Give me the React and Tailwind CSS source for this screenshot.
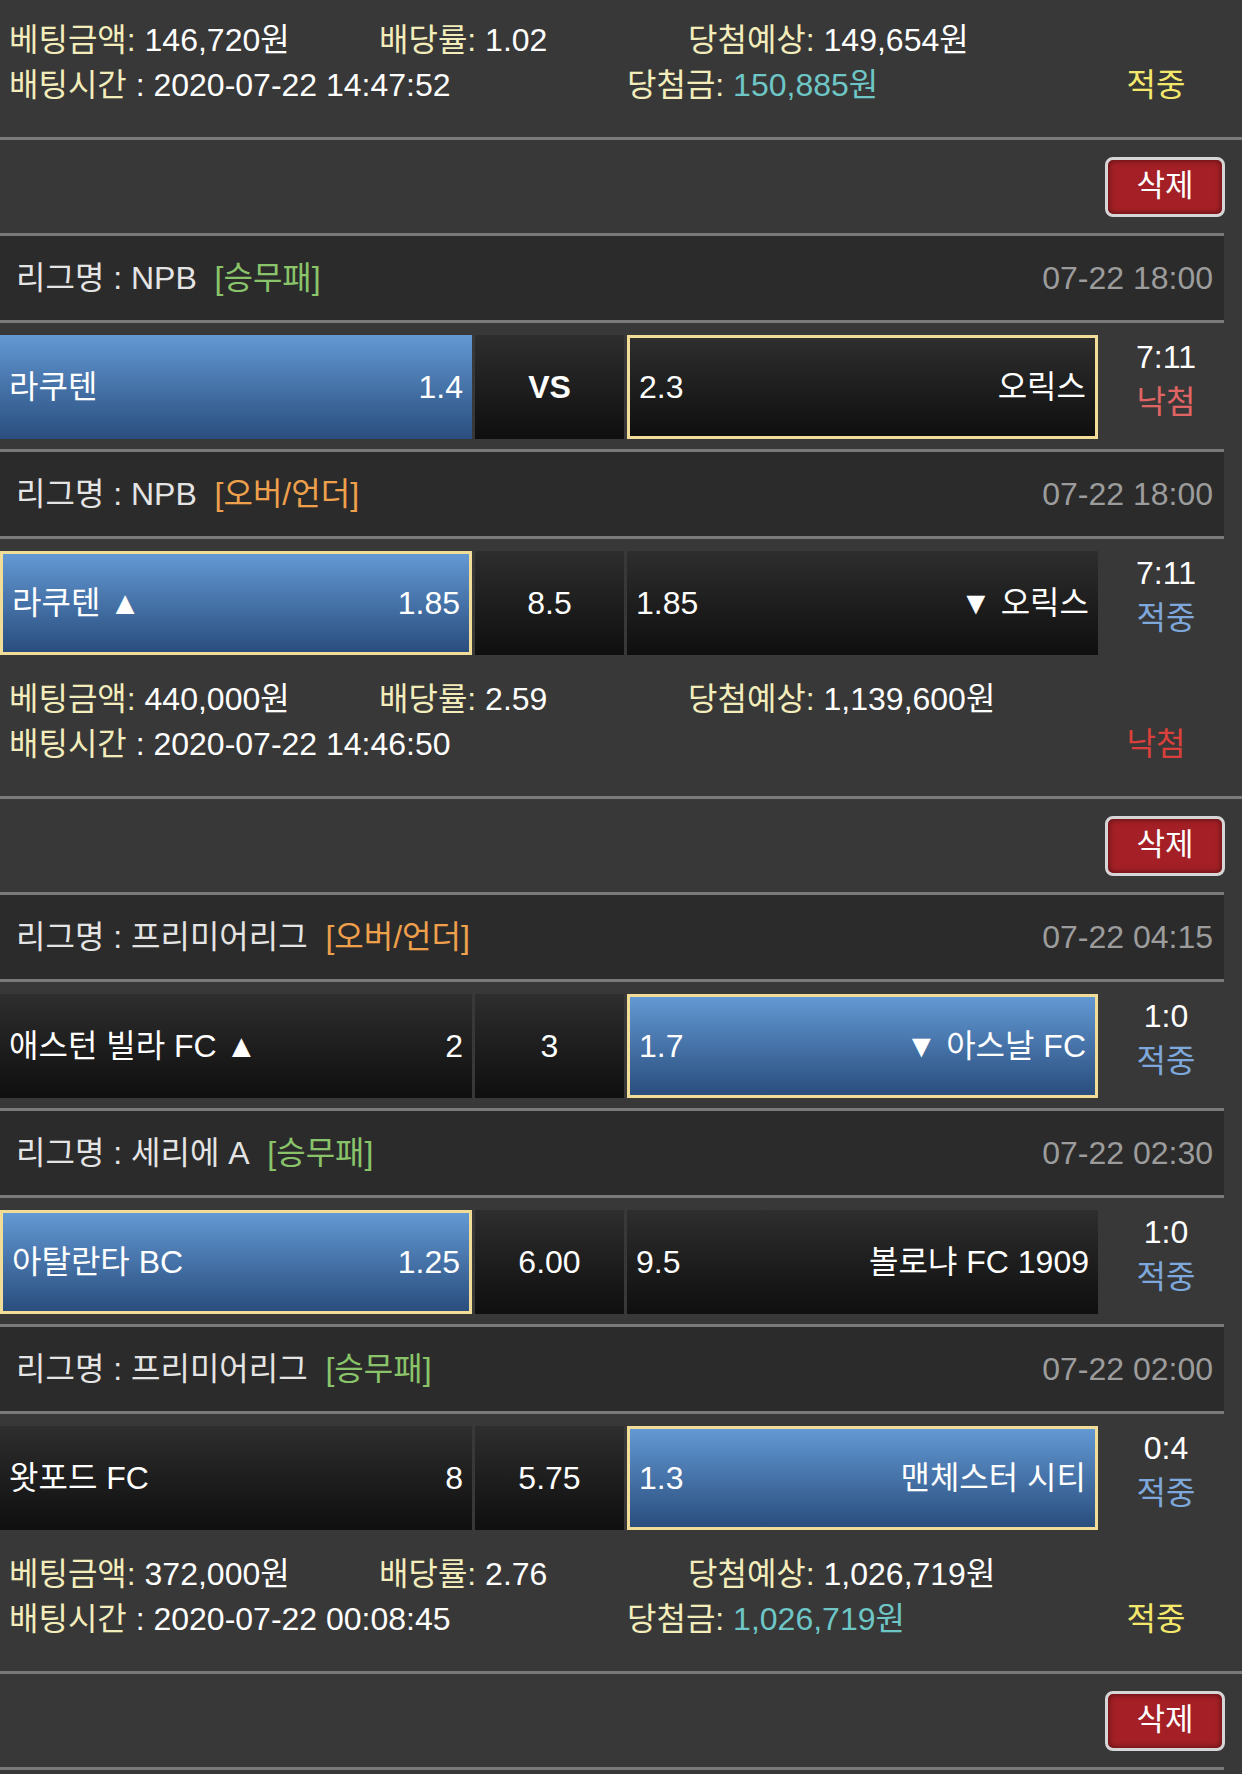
import React from "react";

const FONT = { fontFamily: '"Liberation Sans", "Noto Sans CJK KR", sans-serif' };

const bets = [
  {
    matches: [],
    amount: "146,720원",
    odds: "1.02",
    expected: "149,654원",
    time: "2020-07-22 14:47:52",
    win: "150,885원",
    status: "적중",
    top: true,
  },
  {
    matches: [
      {
        league: "NPB",
        type: "승무패",
        date: "07-22 18:00",
        home: "라쿠텐",
        homeOdds: "1.4",
        homeBlue: true,
        homePick: false,
        mid: "VS",
        awayOdds: "2.3",
        away: "오릭스",
        awayBlue: false,
        awayPick: true,
        score: "7:11",
        result: "낙첨",
      },
      {
        league: "NPB",
        type: "오버/언더",
        date: "07-22 18:00",
        home: "라쿠텐 ▲",
        homeOdds: "1.85",
        homeBlue: true,
        homePick: true,
        mid: "8.5",
        awayOdds: "1.85",
        away: "▼ 오릭스",
        awayBlue: false,
        awayPick: false,
        score: "7:11",
        result: "적중",
      },
    ],
    amount: "440,000원",
    odds: "2.59",
    expected: "1,139,600원",
    time: "2020-07-22 14:46:50",
    win: null,
    status: "낙첨",
  },
  {
    matches: [
      {
        league: "프리미어리그",
        type: "오버/언더",
        date: "07-22 04:15",
        home: "애스턴 빌라 FC ▲",
        homeOdds: "2",
        homeBlue: false,
        homePick: false,
        mid: "3",
        awayOdds: "1.7",
        away: "▼ 아스날 FC",
        awayBlue: true,
        awayPick: true,
        score: "1:0",
        result: "적중",
      },
      {
        league: "세리에 A",
        type: "승무패",
        date: "07-22 02:30",
        home: "아탈란타 BC",
        homeOdds: "1.25",
        homeBlue: true,
        homePick: true,
        mid: "6.00",
        awayOdds: "9.5",
        away: "볼로냐 FC 1909",
        awayBlue: false,
        awayPick: false,
        score: "1:0",
        result: "적중",
      },
      {
        league: "프리미어리그",
        type: "승무패",
        date: "07-22 02:00",
        home: "왓포드 FC",
        homeOdds: "8",
        homeBlue: false,
        homePick: false,
        mid: "5.75",
        awayOdds: "1.3",
        away: "맨체스터 시티",
        awayBlue: true,
        awayPick: true,
        score: "0:4",
        result: "적중",
      },
    ],
    amount: "372,000원",
    odds: "2.76",
    expected: "1,026,719원",
    time: "2020-07-22 00:08:45",
    win: "1,026,719원",
    status: "적중",
  },
];

const Line = ({ full }) => (
  <div className={`h-[3px] bg-[#7a7a7a] ${full ? "w-full" : "w-[1224px]"}`} />
);

const Cell = ({ blue, pick, className, children }) => (
  <div
    className={`h-[104px] flex items-center px-[9px] ${
      blue
        ? "bg-gradient-to-b from-[#6399d4] to-[#2a4e7e]"
        : "bg-gradient-to-b from-[#2e2e2e] to-[#0f0f0f]"
    } ${pick ? "border-[3px] border-[#f1dc98]" : ""} ${className}`}
  >
    {children}
  </div>
);

const Match = ({ m, last }) => (
  <div>
    <div className="w-[1224px] h-[84px] bg-[#2b2b2b] flex items-center justify-between pl-[16px] pr-[11px]">
      <div className="text-[#e4e4e4]">
        리그명 : {m.league}&nbsp;{" "}
        <span className={m.type === "승무패" ? "text-[#8ac46a]" : "text-[#eea04c]"}>
          [{m.type}]
        </span>
      </div>
      <div className="text-[#9c9c9c]">{m.date}</div>
    </div>
    <Line />
    <div className={`flex gap-[3px] pt-[12px] ${last ? "" : "pb-[10px]"}`}>
      <Cell blue={m.homeBlue} pick={m.homePick} className="w-[472px] justify-between">
        <span>{m.home}</span>
        <span>{m.homeOdds}</span>
      </Cell>
      <div
        className={`w-[149px] h-[104px] flex items-center justify-center bg-gradient-to-b from-[#2e2e2e] to-[#0f0f0f] ${
          m.mid === "VS" ? "font-bold" : ""
        }`}
      >
        {m.mid}
      </div>
      <Cell blue={m.awayBlue} pick={m.awayPick} className="w-[471px] justify-between">
        <span>{m.awayOdds}</span>
        <span>{m.away}</span>
      </Cell>
      <div className="w-[136px] -ml-[3px] pb-[14px] flex flex-col items-center justify-center leading-[45px]">
        <span>{m.score}</span>
        <span className={m.result === "낙첨" ? "text-[#e06464]" : "text-[#7ea8dc]"}>
          {m.result}
        </span>
      </div>
    </div>
    {!last && <Line />}
  </div>
);

const Info = ({ b }) => (
  <div className={`pl-[9px] pr-[18px] ${b.top ? "pt-[18px]" : "pt-[22px]"} pb-[29px] leading-[45px]`}>
    <div className="flex">
      <div className="w-[370px]">
        <span className="text-[#f2edbb]">베팅금액:</span> {b.amount}
      </div>
      <div className="w-[309px]">
        <span className="text-[#f2edbb]">배당률:</span> {b.odds}
      </div>
      <div>
        <span className="text-[#f2edbb]">당첨예상:</span> {b.expected}
      </div>
    </div>
    <div className="flex">
      <div className="w-[618px]">
        <span className="text-[#f2edbb]">배팅시간</span> : {b.time}
      </div>
      <div className="flex-1">
        {b.win && (
          <>
            <span className="text-[#f2edbb]">당첨금:</span>{" "}
            <span className="text-[#6ec6c6]">{b.win}</span>
          </>
        )}
      </div>
      <div
        className={`w-[136px] text-center ${
          b.status === "적중" ? "text-[#f4e86c]" : "text-[#d9403b]"
        }`}
      >
        {b.status}
      </div>
    </div>
  </div>
);

const DeleteRow = () => (
  <div className="w-full h-[93px] flex items-center justify-end pr-[17px]">
    <button className="w-[120px] h-[60px] rounded-lg border-[3px] border-[#d6d6d6] bg-[#a42026] text-white text-[31px] shadow-[inset_0_0_6px_rgba(0,0,0,0.55)]">
      삭제
    </button>
  </div>
);

export default function App() {
  return (
    <div
      className="w-[1242px] min-h-[1774px] bg-[#383838] text-white text-[32px] overflow-hidden"
      style={FONT}
    >
      {bets.map((b, i) => (
        <div key={i}>
          {b.matches.map((m, j) => (
            <Match key={j} m={m} last={j === b.matches.length - 1} />
          ))}
          <Info b={b} />
          <Line full />
          <DeleteRow />
          <Line />
        </div>
      ))}
    </div>
  );
}
